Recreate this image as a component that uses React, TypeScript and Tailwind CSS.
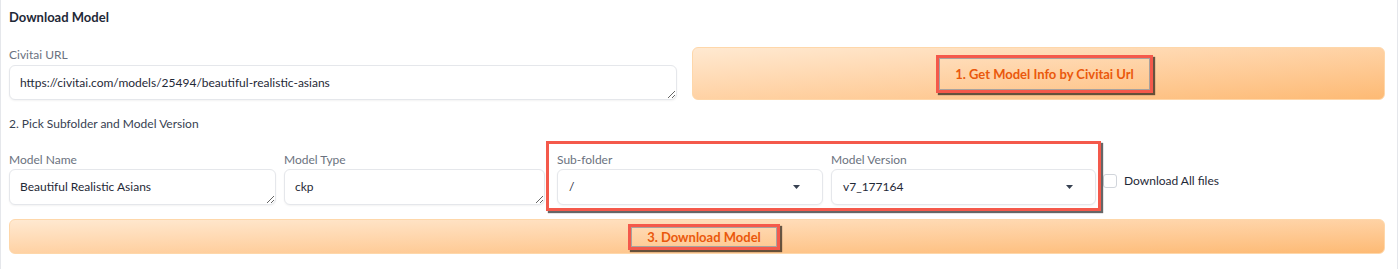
import React from "react"

const font = { fontFamily: "Lato, 'Noto Sans', sans-serif" }

function Field({
  label,
  value,
  className,
}: {
  label: string
  value: string
  className: string
}) {
  return (
    <div className={`flex flex-col ${className}`}>
      <span className="text-[12px] leading-[16px] text-[#6b7280]">{label}</span>
      <textarea
        readOnly
        value={value}
        rows={1}
        className="mt-[1px] h-[36px] w-full overflow-hidden rounded-[6px] border border-[#e5e7eb] bg-white px-[10px] py-[9px] text-[12px] leading-[16px] text-[#1f2937] shadow-[0_1px_2px_rgba(0,0,0,0.05)] outline-none"
        style={font}
      />
    </div>
  )
}

function Dropdown({
  label,
  value,
  className,
}: {
  label: string
  value: string
  className: string
}) {
  return (
    <div className={`flex flex-col ${className}`}>
      <span className="text-[12px] leading-[16px] text-[#6b7280]">{label}</span>
      <div className="mt-[1px] flex h-[36px] items-center justify-between rounded-[6px] border border-[#e5e7eb] bg-white pl-[11px] pr-[22px] text-[12px] text-[#1f2937] shadow-[0_1px_2px_rgba(0,0,0,0.05)]">
        <span>{value}</span>
        <svg width="7" height="4" viewBox="0 0 7 4">
          <path d="M0 0 L7 0 L3.5 4 Z" fill="#374151" />
        </svg>
      </div>
    </div>
  )
}

const mark =
  "inline-flex border-[3px] border-[#f4594b] shadow-[inset_0_0_0_1px_#a8a29e,2px_2px_1px_rgba(0,0,0,0.6)]"

const orangeButton =
  "flex items-center justify-center rounded-[6px] border border-[#fed7aa] bg-linear-to-br from-[#ffe9d1] to-[#fdba74] text-[13px] font-bold leading-[16px] text-[#ea580c]"

export default function App() {
  return (
    <div
      className="h-[269px] w-[1398px] border-x border-[#e5e7eb] bg-white pl-2 pr-3 pt-2"
      style={font}
    >
      <h2 className="text-[13px] font-bold leading-[18px] text-[#1f2937]">Download Model</h2>

      <div className="mt-[21px] flex gap-[15px]">
        <div className="flex w-[668px] flex-col">
          <span className="text-[12px] leading-[16px] text-[#6b7280]">Civitai URL</span>
          <textarea
            readOnly
            rows={1}
            value="https://civitai.com/models/25494/beautiful-realistic-asians"
            className="mt-[2px] h-[35px] w-full overflow-hidden rounded-[6px] border border-[#e5e7eb] bg-white px-[10px] py-[9px] text-[12px] leading-[16px] text-[#1f2937] shadow-[0_1px_2px_rgba(0,0,0,0.05)] outline-none"
            style={font}
          />
        </div>
        <button className={`${orangeButton} h-[53px] flex-1`} style={font}>
          <span className={`${mark} ml-[12px] px-[16px] py-[8px]`}>1. Get Model Info by Civitai Url</span>
        </button>
      </div>

      <p className="mt-[16px] text-[12px] leading-[16px] text-[#374151]">
        2. Pick Subfolder and Model Version
      </p>

      <div className="mt-[20px] flex">
        <Field label="Model Name" value="Beautiful Realistic Asians" className="w-[267px]" />
        <Field label="Model Type" value="ckp" className="ml-[8px] w-[261px]" />
        <div className="relative ml-[12px] flex gap-[8px]">
          <Dropdown label="Sub-folder" value="/" className="w-[266px]" />
          <Dropdown label="Model Version" value="v7_177164" className="w-[265px]" />
          <div className="pointer-events-none absolute -bottom-[6px] -left-[11px] -right-[5px] -top-[11px] border-[3px] border-[#f4594b] shadow-[2px_2px_1px_rgba(0,0,0,0.6)]" />
        </div>
        <label className="ml-[7px] flex items-center gap-[7px] self-start pt-[21px] text-[12px] leading-[16px] text-[#1f2937]">
          <span className="h-[14px] w-[14px] rounded-[3px] border border-[#d1d5db] bg-white" />
          Download All files
        </label>
      </div>

      <button className={`${orangeButton} mt-[14px] h-[35px] w-full`} style={font}>
        <span className={`${mark} ml-[14px] px-[16px] py-[2px]`}>3. Download Model</span>
      </button>
    </div>
  )
}
